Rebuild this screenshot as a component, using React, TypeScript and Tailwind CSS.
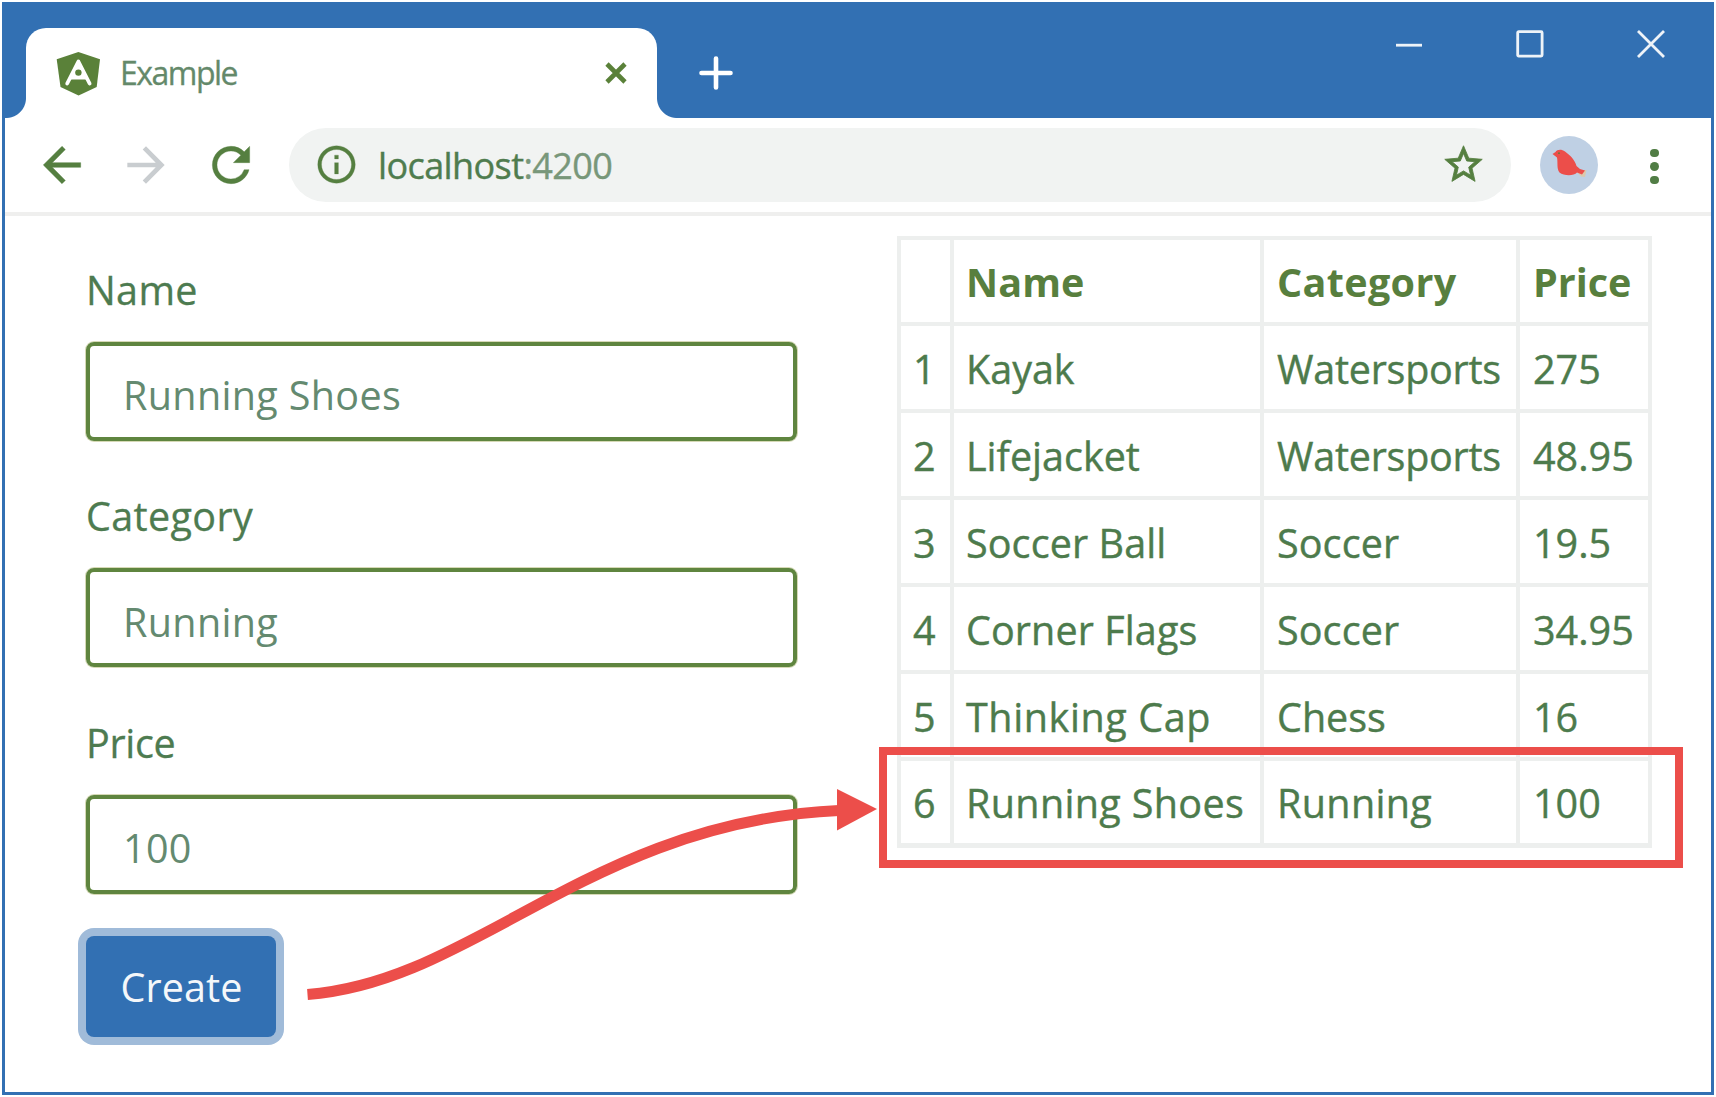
import type { ReactNode } from "react";

type Cell = { text: string; tracking: string };

const T = {
  none: "",
  tight: "tracking-[-0.25px]",
  a: "tracking-[0.1px]",
  b: "tracking-[0.35px]",
  c: "tracking-[0.6px]",
  back: "tracking-[-0.3px]",
};

const header: Cell[] = [
  { text: "", tracking: T.none },
  { text: "Name", tracking: T.a },
  { text: "Category", tracking: T.b },
  { text: "Price", tracking: T.none },
];

const rows: Cell[][] = [
  [
    { text: "1", tracking: T.none },
    { text: "Kayak", tracking: T.none },
    { text: "Watersports", tracking: T.tight },
    { text: "275", tracking: T.none },
  ],
  [
    { text: "2", tracking: T.none },
    { text: "Lifejacket", tracking: T.none },
    { text: "Watersports", tracking: T.tight },
    { text: "48.95", tracking: T.none },
  ],
  [
    { text: "3", tracking: T.none },
    { text: "Soccer Ball", tracking: T.a },
    { text: "Soccer", tracking: T.a },
    { text: "19.5", tracking: T.none },
  ],
  [
    { text: "4", tracking: T.none },
    { text: "Corner Flags", tracking: T.a },
    { text: "Soccer", tracking: T.a },
    { text: "34.95", tracking: T.none },
  ],
  [
    { text: "5", tracking: T.none },
    { text: "Thinking Cap", tracking: T.c },
    { text: "Chess", tracking: T.none },
    { text: "16", tracking: T.none },
  ],
  [
    { text: "6", tracking: T.none },
    { text: "Running Shoes", tracking: T.b },
    { text: "Running", tracking: T.b },
    { text: "100", tracking: T.none },
  ],
];

const fields = [
  { label: "Name", labelTracking: T.b, value: "Running Shoes", tracking: T.b },
  { label: "Category", labelTracking: T.b, value: "Running", tracking: T.b },
  { label: "Price", labelTracking: T.back, value: "100", tracking: T.b },
];

function Glyph({ d, className }: { d: string; className: string }) {
  return (
    <svg viewBox="0 0 24 24" fill="currentColor" className={`shrink-0 ${className}`}>
      <path d={d} />
    </svg>
  );
}

function AngularLogo() {
  return (
    <svg viewBox="56 50 45 45" className="size-[45px] shrink-0">
      <path d="M78.4 51L100 58.3L96.7 86L78.6 94.5L60.5 86L56.7 58.3Z" fill="#5a8139" />
      <path d="M67.2 82.5L78.4 60.5L89.6 82.5" fill="none" stroke="#fff" strokeWidth="3.8" strokeLinecap="round" strokeLinejoin="round" />
      <path d="M78.4 61L86.5 78.6H70.300Z" fill="#fff" />
      <circle cx="78.4" cy="71.6" r="3.2" fill="#5a8139" />
    </svg>
  );
}

function TitleBar() {
  return (
    <div className="flex h-[113px] items-end bg-[#3270b3]">
      <div className="relative ml-[21px] flex h-[90px] w-[631px] items-center rounded-t-[20px] bg-white pl-[30px]">
        <span className="absolute bottom-0 -left-5 size-5 bg-[radial-gradient(circle_at_0_0,transparent_19.5px,white_20.5px)]" />
        <span className="absolute -right-5 bottom-0 size-5 bg-[radial-gradient(circle_at_100%_0,transparent_19.5px,white_20.5px)]" />
        <AngularLogo />
        <span className="ml-[19px] flex-1 pb-px text-[32px] tracking-[-1.5px] text-[#64896a] [-webkit-text-stroke:0.3px]">Example</span>
        <svg viewBox="0 0 24 24" className="mr-[29px] size-6 text-[#5a8139]">
          <path d="M3 3L21 21M21 3L3 21" stroke="currentColor" strokeWidth="4.6" />
        </svg>
      </div>
      <div className="flex h-[90px] flex-1 items-center pl-[42px]">
        <svg viewBox="0 0 34 34" className="size-[34px] text-white">
          <path d="M17 2.5V31.5M2.5 17H31.5" stroke="currentColor" strokeWidth="4.6" strokeLinecap="round" />
        </svg>
      </div>
      <div className="mb-[59px] flex items-center gap-[91px] pr-[45px] text-[#eef3f8]">
        <svg viewBox="0 0 30 30" className="size-[30px]">
          <path d="M2 16.2H28" stroke="currentColor" strokeWidth="2.8" />
        </svg>
        <svg viewBox="0 0 30 30" className="size-[30px]">
          <rect x="2.7" y="2.7" width="24.4" height="24.4" rx="1" fill="none" stroke="currentColor" strokeWidth="2.8" />
        </svg>
        <svg viewBox="0 0 30 30" className="size-[30px]">
          <path d="M2 2L28 28M28 2L2 28" stroke="currentColor" strokeWidth="2.8" />
        </svg>
      </div>
    </div>
  );
}

function Avatar() {
  return (
    <svg viewBox="0 0 60 60" className="ml-[28px] size-[60px] shrink-0">
      <circle cx="30" cy="30" r="29" fill="#bfd0e4" />
      <path d="M37 36L47.500 35L46 42L42 41.500Z" fill="#dcc9ac" />
      <path d="M13.500 19L16.500 17C18 14.500 22.500 14 26 16.500C31 20 36 25 37.500 31L41 34L46 35.500L43 39.500L38 37.500C35 41 25 41 20.500 37.500C17.500 34 19 27 18 22.500Z" fill="#ec4e4a" />
      <circle cx="20" cy="18.200" r="0.900" fill="#5a8139" />
    </svg>
  );
}

function Toolbar() {
  return (
    <div className="flex h-[97.5px] items-center border-b-4 border-[#efefee] pl-[29px] text-[#557f40]">
      <Glyph className="size-14 stroke-current stroke-[0.2]" d="M20 11H7.830l5.590-5.590L12 4l-8 8 8 8 1.410-1.410L7.830 13H20z" />
      <Glyph className="ml-[28px] size-14 text-[#c9cdd0]" d="M12 4l-1.410 1.410L16.170 11H4v2h12.170l-5.580 5.590L12 20l8-8z" />
      <Glyph
        className="ml-[29px] size-14 stroke-current stroke-[0.15]"
        d="M17.650 6.350A7.958 7.958 0 0 0 12 4c-4.420 0-7.990 3.580-7.990 8s3.570 8 7.990 8c3.730 0 6.840-2.550 7.730-6h-2.080A5.990 5.990 0 0 1 12 18c-3.310 0-6-2.690-6-6s2.690-6 6-6c1.660 0 3.140.690 4.220 1.780L13 11h7V4z"
      />
      <div className="ml-[30px] flex h-[74px] w-[1222px] items-center rounded-full bg-[#f1f3f2] px-[25px]">
        <Glyph
          className="size-[45px] stroke-current stroke-[0.15]"
          d="M11 7h2v2h-2zm0 4h2v6h-2zm1-9C6.480 2 2 6.480 2 12s4.480 10 10 10 10-4.480 10-10S17.520 2 12 2zm0 18c-4.410 0-8-3.590-8-8s3.590-8 8-8 8 3.590 8 8-3.590 8-8 8z"
        />
        <span className="ml-[19px] flex-1 pt-[2px] text-[36px] tracking-[-0.6px] text-[#4f7c4e] [-webkit-text-stroke:0.4px]">
          localhost<span className="text-[#78977a]">:4200</span>
        </span>
        <Glyph
          className="size-[45px] stroke-current stroke-[0.45]"
          d="M22 9.240l-7.190-.620L12 2 9.190 8.630 2 9.240l5.460 4.730L5.820 21 12 17.270 18.180 21l-1.630-7.030L22 9.240zM12 15.400l-3.760 2.270 1-4.280-3.320-2.880 4.380-.380L12 6.100l1.710 4.040 4.380.380-3.320 2.880 1 4.280L12 15.400z"
        />
      </div>
      <Avatar />
      <div className="mt-[3px] ml-[51px] flex flex-col gap-[5px]">
        <span className="size-[8.500px] rounded-full bg-[#517d45]" />
        <span className="size-[8.500px] rounded-full bg-[#517d45]" />
        <span className="size-[8.500px] rounded-full bg-[#517d45]" />
      </div>
    </div>
  );
}

function ProductForm() {
  return (
    <form className="ml-[81px] w-[711px] pt-[43px]">
      {fields.map((f) => (
        <div key={f.label} className="mb-[44.500px]">
          <label className={`block h-[60px] pt-px leading-[60px] text-[#4d7b50] [-webkit-text-stroke:0.3px] ${f.labelTracking}`}>{f.label}</label>
          <div
            className={`mt-[23px] flex h-[99px] items-center rounded-lg border-4 border-[#5f853f] pt-[10px] pl-[33px] text-[#648a70] shadow-[0_0_0_1px_#d6d9b6] ${f.tracking}`}
          >
            {f.value}
          </div>
        </div>
      ))}
      <button
        type="button"
        className="-mt-[2px] h-[101px] w-[190px] rounded-lg bg-[#3270b3] pt-[3px] pl-px tracking-[0.1px] text-[#f4f7fa] shadow-[0_0_0_8px_#a0bbd9]"
      >
        Create
      </button>
    </form>
  );
}

function Row({ cells, head }: { cells: Cell[]; head?: boolean }) {
  return (
    <>
      {cells.map((c, i) => (
        <div
          key={i}
          role={head ? "columnheader" : "cell"}
          className={`flex items-center bg-white pt-[4px] ${i > 1 ? "pl-[13px]" : "pl-[12px]"} ${head ? "font-bold text-[#587f3e]" : "text-[#4d7b4c] [-webkit-text-stroke:0.4px]"} ${c.tracking}`}
        >
          {c.text}
        </div>
      ))}
    </>
  );
}

function ProductTable() {
  return (
    <div
      role="table"
      className="mt-[20px] ml-[100px] grid h-[612px] w-[755px] grid-cols-[49px_306px_252px_128px] grid-rows-7 gap-1 bg-[#edefee] p-1"
    >
      <Row cells={header} head />
      {rows.map((r) => (
        <Row key={r[0].text} cells={r} />
      ))}
    </div>
  );
}

function Annotation() {
  return (
    <>
      <div className="absolute top-[747px] left-[879px] h-[121px] w-[804px] border-8 border-[#ec4e4a]" />
      <svg viewBox="300 780 580 230" className="absolute top-[780px] left-[300px] h-[230px] w-[580px]">
        <path d="M307.500 994.500C475 982 590 822 839 810.500" fill="none" stroke="#ec4e4a" strokeWidth="11" />
        <path d="M837 789L877 809L837 830.500Z" fill="#ec4e4a" />
      </svg>
    </>
  );
}

function Frame({ children }: { children: ReactNode }) {
  return (
    <div className="relative flex h-[1097px] w-[1716px] bg-white p-[2px] font-['Open_Sans','Noto_Sans',sans-serif] text-[39.500px]">
      <div className="flex w-[1712px] flex-col border-[3px] border-[#3270b3] bg-white">{children}</div>
    </div>
  );
}

export default function App() {
  return (
    <Frame>
      <TitleBar />
      <Toolbar />
      <div className="flex flex-1 items-start">
        <ProductForm />
        <ProductTable />
      </div>
      <Annotation />
    </Frame>
  );
}
